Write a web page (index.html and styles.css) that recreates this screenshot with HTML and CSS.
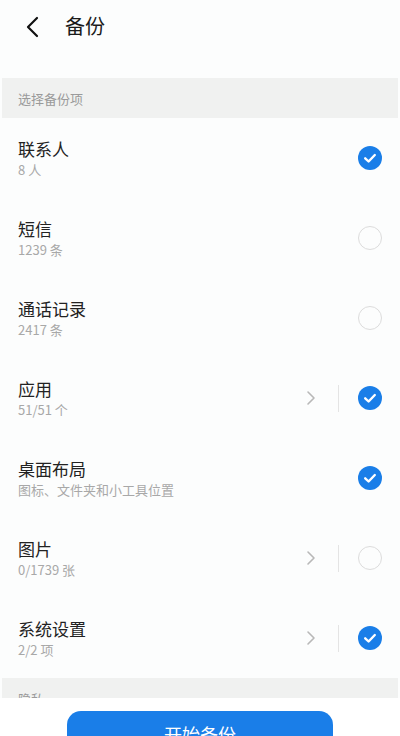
FILE: index.html
```html
<!DOCTYPE html>
<html lang="zh">
<head>
<meta charset="utf-8">
<link rel="stylesheet" href="styles.css">
</head>
<body>
<div class="screen">
  <header class="topbar">
    <svg class="back" width="14" height="22" viewBox="0 0 14 22"><path d="M12 2 L3 11 L12 20" fill="none" stroke="#111" stroke-width="2.2" stroke-linecap="round" stroke-linejoin="round"/></svg>
    <h1 class="title">备份</h1>
  </header>
  <main class="content">
    <div class="section">选择备份项</div>
    <div class="row">
      <div class="text"><div class="name">联系人</div><div class="sub">8 人</div></div>
      <span class="check on"><svg width="24" height="24" viewBox="0 0 24 24"><path d="M7.2 12.3 L10.6 15.5 L16.8 9" fill="none" stroke="#fff" stroke-width="2.4" stroke-linecap="round" stroke-linejoin="round"/></svg></span>
    </div>
    <div class="row">
      <div class="text"><div class="name">短信</div><div class="sub">1239 条</div></div>
      <span class="check"></span>
    </div>
    <div class="row">
      <div class="text"><div class="name">通话记录</div><div class="sub">2417 条</div></div>
      <span class="check"></span>
    </div>
    <div class="row">
      <div class="text"><div class="name">应用</div><div class="sub">51/51 个</div></div>
      <svg class="arrow" width="10" height="16" viewBox="0 0 10 16"><path d="M2 2 L8 8 L2 14" fill="none" stroke="#b8b8b8" stroke-width="1.6" stroke-linecap="round" stroke-linejoin="round"/></svg>
      <span class="divider"></span>
      <span class="check on"><svg width="24" height="24" viewBox="0 0 24 24"><path d="M7.2 12.3 L10.6 15.5 L16.8 9" fill="none" stroke="#fff" stroke-width="2.4" stroke-linecap="round" stroke-linejoin="round"/></svg></span>
    </div>
    <div class="row">
      <div class="text"><div class="name">桌面布局</div><div class="sub">图标、文件夹和小工具位置</div></div>
      <span class="check on"><svg width="24" height="24" viewBox="0 0 24 24"><path d="M7.2 12.3 L10.6 15.5 L16.8 9" fill="none" stroke="#fff" stroke-width="2.4" stroke-linecap="round" stroke-linejoin="round"/></svg></span>
    </div>
    <div class="row">
      <div class="text"><div class="name">图片</div><div class="sub">0/1739 张</div></div>
      <svg class="arrow" width="10" height="16" viewBox="0 0 10 16"><path d="M2 2 L8 8 L2 14" fill="none" stroke="#b8b8b8" stroke-width="1.6" stroke-linecap="round" stroke-linejoin="round"/></svg>
      <span class="divider"></span>
      <span class="check"></span>
    </div>
    <div class="row">
      <div class="text"><div class="name">系统设置</div><div class="sub">2/2 项</div></div>
      <svg class="arrow" width="10" height="16" viewBox="0 0 10 16"><path d="M2 2 L8 8 L2 14" fill="none" stroke="#b8b8b8" stroke-width="1.6" stroke-linecap="round" stroke-linejoin="round"/></svg>
      <span class="divider"></span>
      <span class="check on"><svg width="24" height="24" viewBox="0 0 24 24"><path d="M7.2 12.3 L10.6 15.5 L16.8 9" fill="none" stroke="#fff" stroke-width="2.4" stroke-linecap="round" stroke-linejoin="round"/></svg></span>
    </div>
    <div class="section">隐私</div>
  </main>
  <footer class="footer">
    <button class="start">开始备份</button>
  </footer>
</div>
</body>
</html>
```
FILE: styles.css
```css
* { box-sizing: border-box; }
html, body { margin: 0; padding: 0; }
body {
  background: #fcfdfd;
  font-family: "Noto Sans CJK SC", "Noto Sans", Roboto, sans-serif;
  color: #222;
}
.screen {
  width: 400px;
  height: 736px;
  display: flex;
  flex-direction: column;
  overflow: hidden;
  background: #fcfdfd;
}
.topbar {
  height: 78px;
  flex: 0 0 78px;
  display: flex;
  align-items: flex-start;
  padding: 15px 0 0 25px;
}
.back { margin-top: 1px; }
.title {
  margin: 0 0 0 26px;
  font-size: 20px;
  font-weight: 400;
  line-height: 22px;
  color: #1a1a1a;
}
.content {
  flex: 1;
  overflow: hidden;
  padding: 0 2px;
}
.section {
  height: 40px;
  background: #f0f1f0;
  padding-left: 16px;
  font-size: 13px;
  line-height: 42px;
  color: #9a9a9a;
}
.row {
  height: 80px;
  display: flex;
  align-items: center;
  padding: 0 16px 0 16px;
}
.text {
  flex: 1;
  display: flex;
  flex-direction: column;
  margin-top: 0;
}
.name {
  font-size: 17px;
  line-height: 22px;
  color: #222;
}
.sub {
  font-size: 13px;
  line-height: 18px;
  margin-top: 1px;
  color: #a8a8a8;
}
.arrow { margin-right: 22px; }
.divider {
  width: 1px;
  height: 27px;
  background: #e4e4e4;
  margin-right: 19px;
}
.check {
  width: 24px;
  height: 24px;
  border-radius: 50%;
  border: 1.5px solid #dcdcdc;
  display: flex;
  align-items: center;
  justify-content: center;
  flex: 0 0 24px;
}
.check.on {
  border: none;
  background: #1a7ee8;
}
.footer {
  flex: 0 0 38px;
  background: #fff;
  padding: 13px 67px 0;
  overflow: hidden;
}
.start {
  display: block;
  width: 100%;
  height: 46px;
  border: none;
  border-radius: 14px;
  background: #1a7ee8;
  color: #fff;
  font-family: "Noto Sans CJK SC", sans-serif;
  font-size: 18px;
  padding: 0;
  line-height: 46px;
}
```
